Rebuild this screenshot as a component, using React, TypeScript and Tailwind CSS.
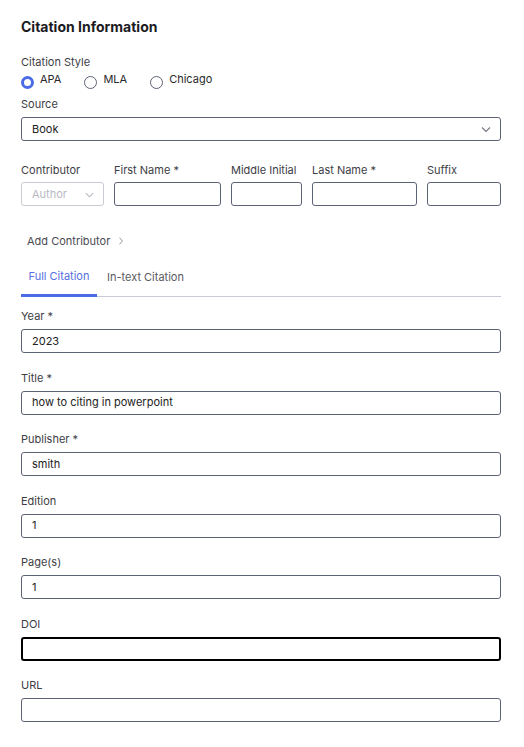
import React, { useState } from 'react';

const font = { fontFamily: 'Inter, "Noto Sans", sans-serif' };

const Chevron = ({ className }: { className?: string }) => (
  <svg viewBox="0 0 12 12" className={className} fill="none" stroke="currentColor" strokeWidth="1.2">
    <path d="M2 4.5 6 8.5 10 4.5" />
  </svg>
);

const Field = ({ label, value, focused }: { label: string; value?: string; focused?: boolean }) => (
  <div className="flex flex-col">
    <label className="text-[11px] text-[#3d3d45] leading-[14px]">{label}</label>
    <div
      className={`mt-[6px] h-[24px] rounded-[3px] flex items-center px-[10px] text-[11px] text-[#222] ${
        focused ? 'border-2 border-black' : 'border border-[#5d6275]'
      }`}
    >
      {value}
    </div>
  </div>
);

const Radio = ({ label, checked, onClick }: { label: string; checked: boolean; onClick: () => void }) => (
  <button type="button" onClick={onClick} className="flex items-start gap-[6px] mr-[23px]">
    <span
      className={`mt-[4px] w-[13px] h-[13px] rounded-full bg-white ${
        checked ? 'border-[3.5px] border-[#4b6be6]' : 'border border-[#5d6275]'
      }`}
    />
    <span className="text-[11px] text-[#2a2a2a] leading-[14px]">{label}</span>
  </button>
);

export default function App() {
  const [style, setStyle] = useState('APA');
  const [tab, setTab] = useState('full');

  return (
    <div className="w-[524px] min-h-[747px] bg-white pl-[21px] pr-[23px] pt-[18px]" style={font}>
      <h2 className="text-[14px] font-bold text-[#1b1b1f] leading-[18px]">Citation Information</h2>

      <p className="mt-[19px] text-[11px] text-[#3d3d45] leading-[14px]">Citation Style</p>
      <div className="flex mt-[3px]">
        {['APA', 'MLA', 'Chicago'].map((s) => (
          <Radio key={s} label={s} checked={style === s} onClick={() => setStyle(s)} />
        ))}
      </div>

      <p className="mt-[8px] text-[11px] text-[#3d3d45] leading-[14px]">Source</p>
      <div className="mt-[6px] h-[24px] rounded-[3px] border border-[#5d6275] flex items-center justify-between pl-[10px] pr-[8px] text-[11px] text-[#222]">
        <span>Book</span>
        <Chevron className="w-[12px] h-[12px] text-[#777b88]" />
      </div>

      <div className="mt-[22px] flex gap-[10px]">
        <div className="flex flex-col w-[83px]">
          <label className="text-[11px] text-[#3d3d45] leading-[14px]">Contributor</label>
          <div className="mt-[5px] h-[24px] rounded-[3px] border border-[#c9cad2] flex items-center justify-between pl-[10px] pr-[8px] text-[11px] text-[#b8b9c2]">
            <span>Author</span>
            <Chevron className="w-[11px] h-[11px] text-[#b8b9c2]" />
          </div>
        </div>
        {[
          ['First Name *', 'w-[107px]'],
          ['Middle Initial', 'w-[71px]'],
          ['Last Name *', 'w-[105px]'],
          ['Suffix', 'flex-1'],
        ].map(([l, w]) => (
          <div key={l} className={`flex flex-col ${w}`}>
            <label className="text-[11px] text-[#3d3d45] leading-[14px]">{l}</label>
            <div className="mt-[5px] h-[24px] rounded-[3px] border border-[#5d6275]" />
          </div>
        ))}
      </div>

      <button type="button" className="mt-[28px] ml-[6px] flex items-center gap-[8px] text-[11px] text-[#4a4a52] leading-[14px]">
        Add Contributor
        <svg viewBox="0 0 8 12" className="w-[6px] h-[10px] text-[#8a8b95]" fill="none" stroke="currentColor" strokeWidth="1.2">
          <path d="M2 1.5 6 6 2 10.5" />
        </svg>
      </button>

      <div className="mt-[18px] flex border-b border-[#c9c9d8]">
        <button
          type="button"
          onClick={() => setTab('full')}
          className={`w-[76px] h-[31px] pb-[8px] text-[11px] -mb-px ${
            tab === 'full' ? 'text-[#5570e0] border-b-[3px] border-[#4b6be6]' : 'text-[#5a5a62]'
          }`}
        >
          Full Citation
        </button>
        <button
          type="button"
          onClick={() => setTab('intext')}
          className={`px-[10px] h-[31px] pb-[8px] text-[11px] -mb-px ${
            tab === 'intext' ? 'text-[#5570e0] border-b-[3px] border-[#4b6be6]' : 'text-[#5a5a62]'
          }`}
        >
          In-text Citation
        </button>
      </div>

      <div className="mt-[12px] flex flex-col gap-[17.5px]">
        <Field label="Year *" value="2023" />
        <Field label="Title *" value="how to citing in powerpoint" />
        <Field label="Publisher *" value="smith" />
        <Field label="Edition" value="1" />
        <Field label="Page(s)" value="1" />
        <Field label="DOI" focused />
        <Field label="URL" />
      </div>
    </div>
  );
}
